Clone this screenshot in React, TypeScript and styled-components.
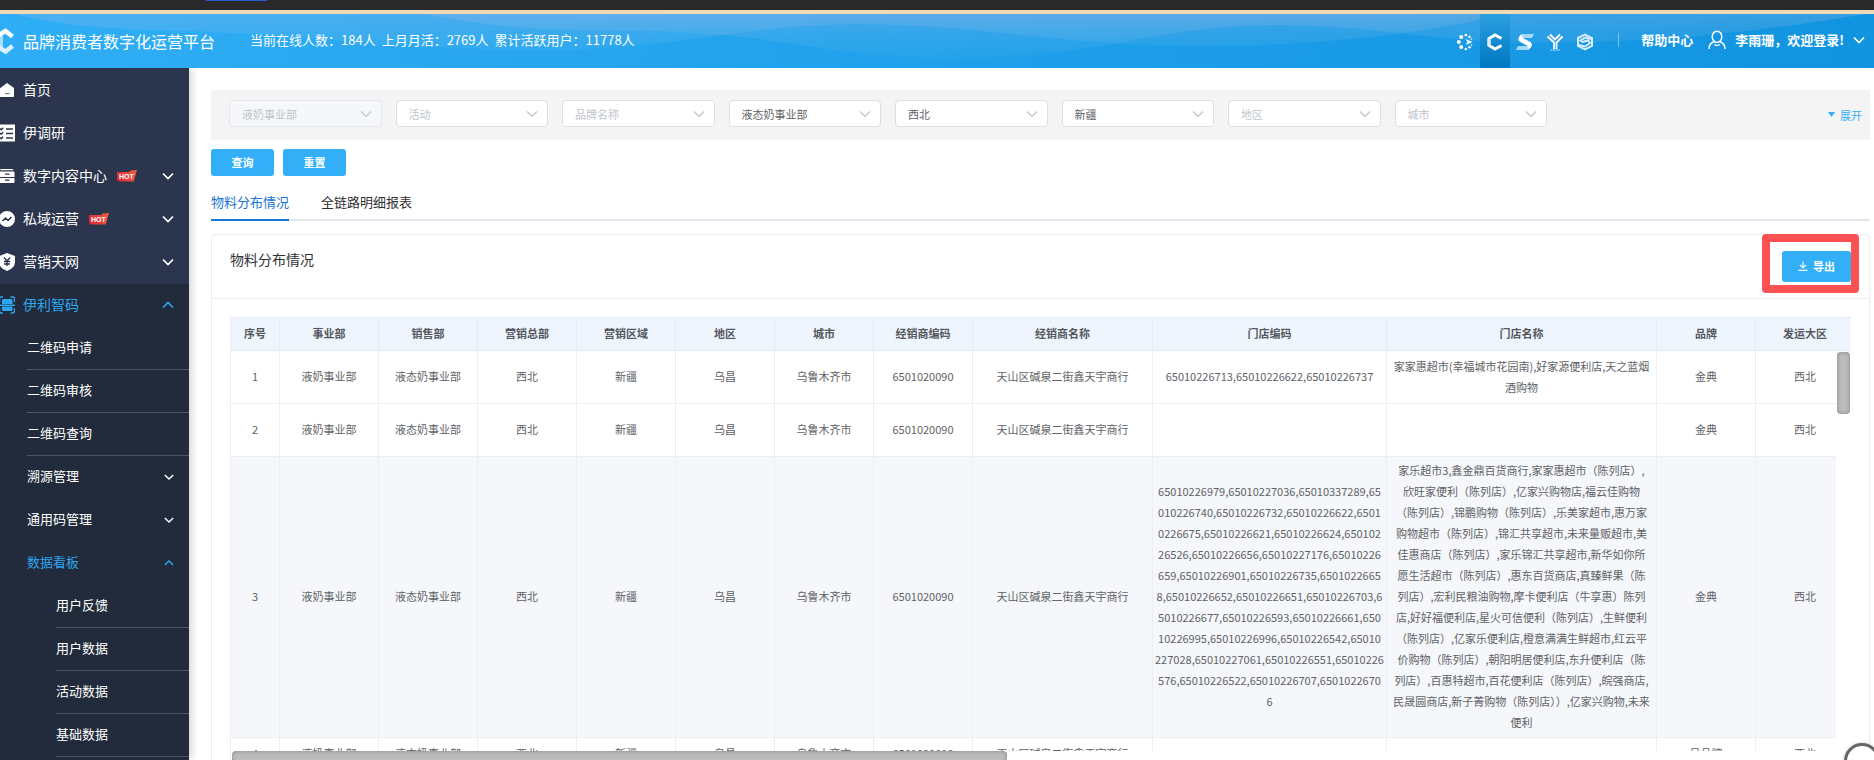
import React from "react";
import styled, { createGlobalStyle, css } from "styled-components";

const GlobalStyle = createGlobalStyle`
  *, *::before, *::after { box-sizing: border-box; }
  html, body, #root { height: 100%; }
  body {
    margin: 0;
    overflow: hidden;
    background: #fff;
    color: #303133;
    font-family: "Noto Sans CJK SC", "Noto Sans", sans-serif;
    font-size: 13px;
  }
  button, select { font-family: inherit; }
  a { color: inherit; text-decoration: none; }
`;

const BLUE = "#33aff8";

const Page = styled.div`
  display: flex;
  flex-direction: column;
  height: 100vh;
  overflow: hidden;
`;

const BrowserEdge = styled.div`
  flex: none;
  height: 14px;
  padding-left: 206px;
  background: #292929;
  border-bottom: 4px solid #eedab5;
`;

const BrowserTab = styled.div`
  width: 61px;
  height: 1px;
  background: #2a5bd0;
`;

/* ---------- top bar ---------- */

const TopBar = styled.header`
  position: relative;
  flex: none;
  display: flex;
  align-items: center;
  height: 54px;
  padding-right: 9px;
  color: #fff;
  background: linear-gradient(100deg, #30aef5 0%, #1f9fea 55%, #1194e0 100%);
`;

const Waves = styled.svg`
  position: absolute;
  inset: 0;
  width: 100%;
  height: 100%;
`;

const Brand = styled.h1`
  position: relative;
  display: flex;
  align-items: center;
  gap: 9px;
  width: 250px;
  margin: 0;
  font-size: 16px;
  font-weight: 400;
  line-height: 54px;
  white-space: nowrap;
`;

const Stats = styled.div`
  position: relative;
  display: flex;
  gap: 6px;
  flex: 1;
  padding-bottom: 2px;
  line-height: 20px;
  white-space: nowrap;
`;

const AppNav = styled.nav`
  position: relative;
  display: flex;
  height: 54px;
`;

const AppLink = styled.a<{ $active?: boolean }>`
  display: flex;
  align-items: center;
  justify-content: center;
  width: 30px;
  height: 54px;
  padding-top: 2px;
  ${(p) => p.$active && css`background: linear-gradient(#2b9fe0, #0077c2);`}
`;

const Divider = styled.span`
  position: relative;
  width: 1px;
  height: 14px;
  margin: 0 22px 3px 18px;
  background: rgba(255, 255, 255, 0.4);
`;

const HelpLink = styled.a`
  position: relative;
  padding-bottom: 2px;
  font-weight: 700;
  line-height: 20px;
`;

const UserButton = styled.button`
  position: relative;
  display: flex;
  align-items: center;
  gap: 9px;
  margin-left: 15px;
  padding: 0 0 2px;
  border: 0;
  background: none;
  color: #fff;
  font-size: 13px;
  font-weight: 700;
  line-height: 20px;
  white-space: nowrap;
`;

/* ---------- side bar ---------- */

const Columns = styled.div`
  display: flex;
  flex: 1;
  min-height: 0;
`;

const SideBar = styled.nav`
  flex: none;
  width: 189px;
  padding-top: 1px;
  overflow: hidden;
  background: #2b364e;
  color: #fff;
  box-shadow: 2px 0 8px rgba(0, 0, 0, 0.2);
`;

const OpenSection = styled.div`
  background: #222b3b;
  min-height: 100%;
`;

const MenuLink = styled.a<{ $active?: boolean }>`
  display: flex;
  align-items: center;
  gap: 8px;
  height: 43px;
  padding: 0 15px 2px 0;
  font-size: 14px;
  line-height: 20px;
  color: ${(p) => (p.$active ? "#2ea5ef" : "#fff")};
`;

const SubMenuLink = styled.a<{ $level: 1 | 2; $lined?: boolean; $active?: boolean }>`
  display: flex;
  align-items: center;
  height: 43px;
  margin-left: ${(p) => (p.$level === 1 ? 27 : 56)}px;
  padding: 0 15px 2px 0;
  border-bottom: ${(p) => (p.$lined ? "1px solid #4c5464" : "0")};
  font-size: 13px;
  line-height: 20px;
  color: ${(p) => (p.$active ? "#2ea5ef" : "#fff")};
`;

const MenuText = styled.span`
  padding-bottom: 1px;
  white-space: nowrap;
`;

const Spring = styled.span`
  flex: 1;
`;

const Hot = styled.span`
  width: 20px;
  height: 12px;
  margin-left: 2px;
  padding: 3px 0 0 2px;
  background: linear-gradient(60deg, #d92436, #f2603f);
  clip-path: polygon(0 20%, 60% 20%, 72% 4%, 78% 10%, 100% 0, 84% 100%, 8% 100%, 0 88%);
  font-family: "Liberation Sans", sans-serif;
  font-size: 7px;
  font-weight: 700;
  line-height: 8px;
`;

/* ---------- content ---------- */

const Main = styled.main`
  flex: 1;
  min-width: 0;
  overflow: hidden;
  padding: 22px 4px 0 22px;
`;

const FilterPanel = styled.form`
  display: grid;
  grid-template-columns: repeat(8, 1fr) 309px;
  align-items: center;
  gap: 14px;
  height: 50px;
  padding-left: 18px;
  padding-bottom: 3px;
  background: #f4f4f4;
`;

const SelectBox = styled.label`
  position: relative;
  display: block;
`;

const SelectInput = styled.select<{ $filled?: boolean }>`
  display: block;
  appearance: none;
  width: 100%;
  height: 27px;
  padding: 0 26px 0 12px;
  border: 1px solid #dcdfe6;
  border-radius: 4px;
  background: #fff;
  color: ${(p) => (p.$filled ? "#606266" : "#c0c4cc")};
  font-size: 11px;
  opacity: 1;
  &:disabled {
    border-color: #e4e7ed;
    background: #f5f7fa;
  }
`;

const SelectArrow = styled.span`
  position: absolute;
  top: 8px;
  right: 10px;
  display: flex;
  pointer-events: none;
`;

const ExpandButton = styled.button`
  display: flex;
  align-items: center;
  justify-self: end;
  gap: 5px;
  margin-right: 8px;
  padding: 2px 0 0;
  border: 0;
  background: none;
  color: ${BLUE};
  font-size: 11px;
`;

const Actions = styled.div`
  display: flex;
  gap: 9px;
  margin-top: 9px;
`;

const PrimaryButton = styled.button`
  display: flex;
  align-items: center;
  justify-content: center;
  gap: 5px;
  width: 63px;
  height: 27px;
  padding: 0 0 1px;
  border: 0;
  border-radius: 3px;
  background: ${BLUE};
  color: #fff;
  font-size: 11px;
  font-weight: 700;
`;

const ExportButton = styled(PrimaryButton)`
  width: 69px;
  height: 31px;
`;

const Tabs = styled.div`
  display: flex;
  gap: 32px;
  height: 36px;
  margin-top: 9px;
  border-bottom: 2px solid #e4e7ed;
`;

const Tab = styled.button<{ $active?: boolean }>`
  height: 36px;
  padding: 0;
  border: 0;
  border-bottom: 2px solid ${(p) => (p.$active ? "#1976d2" : "transparent")};
  background: none;
  color: ${(p) => (p.$active ? "#1976d2" : "#303133")};
  font-size: 13px;
  line-height: 20px;
`;

const Card = styled.section`
  margin-top: 13px;
  border: 1px solid #ebeef5;
  border-radius: 4px;
`;

const CardHead = styled.div`
  display: flex;
  justify-content: space-between;
  height: 64px;
  padding: 16px 18px 0;
  border-bottom: 1px solid #ebeef5;
`;

const CardTitle = styled.h2`
  margin: 0;
  font-size: 14px;
  font-weight: 400;
  line-height: 16px;
`;

const ExportArea = styled.div`
  position: relative;
`;

const Highlight = styled.span`
  position: absolute;
  top: -17px;
  right: -8px;
  width: 97px;
  height: 59px;
  border: 8px solid #fc5152;
  border-radius: 4px;
  pointer-events: none;
`;

const TableWrap = styled.div`
  position: relative;
  margin: 18px 18px 0;
  overflow: hidden;
  border-left: 1px solid #ebeef5;
`;

const Grid = styled.table`
  width: 1624px;
  table-layout: fixed;
  border-collapse: separate;
  border-spacing: 0;
  color: #606266;
  font-size: 11px;
  line-height: 21px;
  text-align: center;
  white-space: nowrap;
`;

const HeadCell = styled.th`
  height: 34px;
  padding: 0 0 2px;
  border: solid #e6ebf3;
  border-width: 1px 1px 1px 0;
  background: #eef5fc;
  color: #55585e;
  font-weight: 700;
`;

const BodyView = styled.div`
  height: 400px;
  margin-right: 15px;
  overflow: hidden;
`;

const Row = styled.tr<{ $height: number; $shaded?: boolean }>`
  height: ${(p) => p.$height}px;
  background: ${(p) => (p.$shaded ? "#f5f7fa" : "#fff")};
`;

const Cell = styled.td`
  padding: 3px 0 4px;
  border: solid #ebeef5;
  border-width: 0 1px 1px 0;
`;

const VerticalThumb = styled.div`
  position: absolute;
  top: 35px;
  right: 1px;
  width: 13px;
  height: 62px;
  border-radius: 4px;
  background: #bcbcbc;
  box-shadow: inset 0 0 4px rgba(0, 0, 0, 0.3);
`;

const HorizontalThumb = styled.div`
  width: 775px;
  height: 14px;
  margin-left: 1px;
  border-radius: 4px;
  background: #bcbcbc;
  box-shadow: inset 0 0 4px rgba(0, 0, 0, 0.3);
`;

const FloatButton = styled.button`
  position: fixed;
  right: -6px;
  bottom: -19px;
  width: 36px;
  height: 36px;
  border: 3px solid #666;
  border-radius: 50%;
  background: #fff;
  box-shadow: 0 0 3px rgba(0, 0, 0, 0.2);
`;

/* ---------- icons ---------- */

type ChevronProps = { size?: number; up?: boolean; color?: string; weight?: number };

const Chevron = ({ size = 12, up, color = "currentColor", weight = 1.7 }: ChevronProps) => (
  <svg width={size} height={size} viewBox="0 0 12 12" fill="none" stroke={color} strokeWidth={weight} aria-hidden="true">
    <path d={up ? "M1 8.5 6 3.5l5 5" : "M1 3.5l5 5 5-5"} />
  </svg>
);

const BrandMark = () => (
  <svg width="14" height="27" viewBox="0 0 14 27" fill="none" aria-hidden="true">
    <path d="M1 8v11" stroke="#a9defc" strokeWidth="4" />
    <path d="M-2 7.500 5.500 3 12.500 8.500" stroke="#fff" strokeWidth="4.500" />
    <path d="M-2 19 5.500 23.500 12.500 18" stroke="#d9f1fe" strokeWidth="4.500" />
  </svg>
);

const SparkIcon = () => (
  <svg width="18" height="18" viewBox="0 0 18 18" fill="#fff" aria-hidden="true">
    <circle cx="2.800" cy="9" r="2" />
    <circle cx="5.200" cy="4" r="2" />
    <circle cx="5.200" cy="14" r="2" />
    <circle cx="9.800" cy="2" r="1.300" />
    <circle cx="9.800" cy="16" r="1.300" />
    <circle cx="13.500" cy="3.800" r="1.200" />
    <circle cx="13.500" cy="14.200" r="1.200" />
    <circle cx="15.500" cy="6" r=".8" />
    <circle cx="15.500" cy="12" r=".8" />
    <path d="M9.500 6 16.500 9l-7 3 2-3z" />
  </svg>
);

const HexCIcon = () => (
  <svg width="18" height="18" viewBox="0 0 18 18" fill="none" stroke="#fff" strokeWidth="3" aria-hidden="true">
    <path d="M15.500 5.500 9 2 3 5.500v7L9 16l6.500-3.500" />
    <path d="M3 5.500v7" stroke="#cfeafb" />
  </svg>
);

const SIcon = () => (
  <svg width="18" height="18" viewBox="0 0 18 18" aria-hidden="true">
    <path d="M5 1h13l-2 4H3z" fill="#a5d7f7" />
    <path d="M0 17h13l2-4H2z" fill="#a5d7f7" />
    <path d="M4.500 2.500Q1.500 6 3.500 8l8 4.500q1 .8 .5 2.500h2q3-3.500 .5-5.500L7 5.500Q6 5 6.500 3.500z" fill="#fff" stroke="#fff" strokeWidth=".8" />
  </svg>
);

const YIcon = () => (
  <svg width="18" height="18" viewBox="0 0 18 18" fill="none" stroke="#fff" aria-hidden="true">
    <path d="M1.500 3.500 8 9.500V16M4 1.500l5 5 5-5M16.500 3.500 10.500 9.500V16" strokeWidth="1.800" />
    <path d="M4 17h10" strokeWidth="1" stroke="#a5d7f7" />
  </svg>
);

const HexSIcon = () => (
  <svg width="18" height="18" viewBox="0 0 18 18" fill="none" stroke="#d5edfc" strokeWidth="2" aria-hidden="true">
    <path d="M2 5 9 1.500 16 5v8l-7 3.500L2 13z" />
    <path d="M15 6 9.500 4.500 4.500 7.500l2 1.500 5.500-1.500 2 2.500L9 13.500 3 12" />
  </svg>
);

const UserIcon = () => (
  <svg width="18" height="20" viewBox="0 0 18 20" fill="none" stroke="#fff" strokeWidth="1.500" aria-hidden="true">
    <ellipse cx="9" cy="6.800" rx="4.800" ry="5.600" />
    <path d="M1 19c0-3.500 1.800-6 4.800-7.200M17 19c0-3.500-1.800-6-4.800-7.200M6 14.500q3 2 6 0" />
  </svg>
);

const MenuSvg = styled.svg`
  flex: none;
  width: 15px;
  height: 18px;
`;

const HomeIcon = () => (
  <MenuSvg viewBox="0 0 15 18" aria-hidden="true">
    <path d="M-1 8 7 2l7 5v8q0 1-1 1H-1z" fill="#fff" />
    <path d="M5 12.500h4.500" stroke="#77809a" strokeWidth="1.200" />
  </MenuSvg>
);

const SurveyIcon = () => (
  <MenuSvg viewBox="0 0 15 18" fill="none" aria-hidden="true">
    <path d="M-2 .5h17v17H-2z" fill="#fff" />
    <path d="M6 5h7M6 9.500h7M6 14h7M0 4.500l1.200 1.200 2-2M0 9l1.200 1.200 2-2M0 13.500l1.200 1.200 2-2" stroke="#2b364e" strokeWidth="1.500" />
  </MenuSvg>
);

const DrawerIcon = () => (
  <MenuSvg viewBox="0 0 15 18" fill="#fff" aria-hidden="true">
    <path d="M1 2h11q1 0 1.500 1.200H0Q.3 2 1 2zM-1 4.500h14.500q1 0 1 1V10H-1zM-1 11h15.500v4q0 1-1 1H0z" />
    <path d="M5 7.200h4.500M5 13.200h4.500" stroke="#2b364e" strokeWidth="1.200" />
  </MenuSvg>
);

const TrendIcon = () => (
  <MenuSvg viewBox="0 0 15 18" aria-hidden="true">
    <circle cx="7" cy="9" r="8" fill="#fff" />
    <path d="M2.500 11 5.500 8l2.500 2.500 3.500-3.500" stroke="#2b364e" strokeWidth="1.500" fill="none" />
  </MenuSvg>
);

const ShieldIcon = () => (
  <MenuSvg viewBox="0 0 15 18" aria-hidden="true">
    <path d="M7 0l8 3v6q0 6-8 9-8-3-8-9V3z" fill="#fff" />
    <path d="M4 4.500 7 8l3-3.500M7 8v5M4 8.500h6M4 11h6" stroke="#2b364e" strokeWidth="1.400" fill="none" />
  </MenuSvg>
);

const ScanIcon = () => (
  <MenuSvg viewBox="0 0 15 18" fill="#2ea5ef" aria-hidden="true">
    <path d="M3 3h8q1.500 0 1.500 1.500V8H2V4.500Q2 3 3 3zM2 10.500h10.500v3q0 1.500-1.500 1.500H3q-1 0-1-1.500z" />
    <path d="M-1 9.200h16M10.500 1h2Q14.500 1 14.500 3v3M14.500 12v3q0 2-2 2h-2M3 1H1Q-.5 1-.5 3v3M-.5 12v3q0 2 1.500 2h2" stroke="#2ea5ef" strokeWidth="1.400" fill="none" />
  </MenuSvg>
);

const DownloadIcon = () => (
  <svg width="10" height="10" viewBox="0 0 10 10" fill="none" stroke="#fff" strokeWidth="1.200" aria-hidden="true">
    <path d="M5 .5v6M2 3.800 5 6.800l3-3M.5 9.300h9" />
  </svg>
);

/* ---------- data ---------- */

const apps = [
  { name: "星火", icon: <SparkIcon /> },
  { name: "C 平台", icon: <HexCIcon />, active: true },
  { name: "S 平台", icon: <SIcon /> },
  { name: "Y 平台", icon: <YIcon /> },
  { name: "蜂巢", icon: <HexSIcon /> },
];

const menu = [
  { label: "首页", icon: <HomeIcon /> },
  { label: "伊调研", icon: <SurveyIcon /> },
  { label: "数字内容中心", icon: <DrawerIcon />, hot: true, more: true },
  { label: "私域运营", icon: <TrendIcon />, hot: true, more: true },
  { label: "营销天网", icon: <ShieldIcon />, more: true },
];

type SubItem = { label: string; level: 1 | 2; lined?: boolean; more?: boolean; open?: boolean };

const subMenu: SubItem[] = [
  { label: "二维码申请", level: 1, lined: true },
  { label: "二维码审核", level: 1, lined: true },
  { label: "二维码查询", level: 1, lined: true },
  { label: "溯源管理", level: 1, more: true },
  { label: "通用码管理", level: 1, more: true },
  { label: "数据看板", level: 1, more: true, open: true },
  { label: "用户反馈", level: 2, lined: true },
  { label: "用户数据", level: 2, lined: true },
  { label: "活动数据", level: 2, lined: true },
  { label: "基础数据", level: 2, lined: true },
];

const filters = [
  { name: "事业部", text: "液奶事业部", disabled: true },
  { name: "活动", text: "活动" },
  { name: "品牌名称", text: "品牌名称" },
  { name: "销售部", text: "液态奶事业部", filled: true },
  { name: "营销总部", text: "西北", filled: true },
  { name: "营销区域", text: "新疆", filled: true },
  { name: "地区", text: "地区" },
  { name: "城市", text: "城市" },
];

const columns = [
  { title: "序号", width: 49 },
  { title: "事业部", width: 99 },
  { title: "销售部", width: 99 },
  { title: "营销总部", width: 99 },
  { title: "营销区域", width: 99 },
  { title: "地区", width: 99 },
  { title: "城市", width: 99 },
  { title: "经销商编码", width: 99 },
  { title: "经销商名称", width: 180 },
  { title: "门店编码", width: 234 },
  { title: "门店名称", width: 270 },
  { title: "品牌", width: 99 },
  { title: "发运大区", width: 99 },
];

type StoreRecord = { codes: string[]; stores: string[]; brand: string; height: number; shaded?: boolean };

const records: StoreRecord[] = [
  {
    codes: ["65010226713,65010226622,65010226737"],
    stores: ["家家惠超市(幸福城市花园南),好家源便利店,天之蓝烟", "酒购物"],
    brand: "金典",
    height: 53,
  },
  { codes: [], stores: [], brand: "金典", height: 53 },
  {
    codes: [
      "65010226979,65010227036,65010337289,65",
      "010226740,65010226732,65010226622,6501",
      "0226675,65010226621,65010226624,650102",
      "26526,65010226656,65010227176,65010226",
      "659,65010226901,65010226735,6501022665",
      "8,65010226652,65010226651,65010226703,6",
      "5010226677,65010226593,65010226661,650",
      "10226995,65010226996,65010226542,65010",
      "227028,65010227061,65010226551,65010226",
      "576,65010226522,65010226707,6501022670",
      "6",
    ],
    stores: [
      "家乐超市3,鑫金鼎百货商行,家家惠超市（陈列店）,",
      "欣旺家便利（陈列店）,亿家兴购物店,福云佳购物",
      "（陈列店）,锦鹏购物（陈列店）,乐美家超市,惠万家",
      "购物超市（陈列店）,锦汇共享超市,未来量贩超市,美",
      "佳惠商店（陈列店）,家乐锦汇共享超市,新华如你所",
      "愿生活超市（陈列店）,惠东百货商店,真臻鲜果（陈",
      "列店）,宏利民粮油购物,摩卡便利店（牛享惠）陈列",
      "店,好好福便利店,星火可信便利（陈列店）,生鲜便利",
      "（陈列店）,亿家乐便利店,橙意满满生鲜超市,红云平",
      "价购物（陈列店）,朝阳明居便利店,东升便利店（陈",
      "列店）,百惠特超市,百花便利店（陈列店）,皖强商店,",
      "民晟圆商店,新子菁购物（陈列店））,亿家兴购物,未来",
      "便利",
    ],
    brand: "金典",
    height: 281,
    shaded: true,
  },
  { codes: [], stores: [], brand: "呈品牌", height: 33 },
];

const Lines = ({ items }: { items: string[] }) => (
  <>
    {items.map((line, i) => (
      <React.Fragment key={i}>
        {i > 0 && <br />}
        {line}
      </React.Fragment>
    ))}
  </>
);

const ColumnWidths = () => (
  <colgroup>
    {columns.map((c) => (
      <col key={c.title} width={c.width} />
    ))}
  </colgroup>
);

/* ---------- page ---------- */

export default function App() {
  return (
    <Page>
      <GlobalStyle />
      <BrowserEdge>
        <BrowserTab />
      </BrowserEdge>

      <TopBar>
        <Waves viewBox="0 0 1874 54" preserveAspectRatio="none" aria-hidden="true">
          <defs>
            <linearGradient id="wave" x1="0" y1="0" x2="0" y2="54" gradientUnits="userSpaceOnUse">
              <stop offset="0" stopColor="#a4b8e6" stopOpacity=".26" />
              <stop offset="1" stopColor="#7ad0e8" stopOpacity="0" />
            </linearGradient>
          </defs>
          <path
            fill="url(#wave)"
            d="M15 0C60 12 110 15 180 17C300 20 400 36 540 36C680 36 740 10 860 10C980 10 1060 32 1196 32C1320 32 1420 20 1505 0Z"
          />
          <path
            fill="url(#wave)"
            d="M425 0C500 15 560 17 640 17C780 18 820 44 952 44C1110 44 1150 11 1277 11C1380 11 1440 30 1550 29C1680 28 1780 14 1866 0Z"
          />
        </Waves>
        <Brand>
          <BrandMark />
          品牌消费者数字化运营平台
        </Brand>
        <Stats>
          <span>当前在线人数：184人</span>
          <span>上月月活：2769人</span>
          <span>累计活跃用户：11778人</span>
        </Stats>
        <AppNav aria-label="应用">
          {apps.map((app) => (
            <AppLink key={app.name} href="#" aria-label={app.name} $active={app.active}>
              {app.icon}
            </AppLink>
          ))}
        </AppNav>
        <Divider />
        <HelpLink href="#">帮助中心</HelpLink>
        <UserButton type="button">
          <UserIcon />
          李雨珊，欢迎登录!
          <Chevron size={12} />
        </UserButton>
      </TopBar>

      <Columns>
        <SideBar>
          {menu.map((item) => (
            <MenuLink key={item.label} href="#">
              {item.icon}
              <MenuText>{item.label}</MenuText>
              {item.hot && <Hot>HOT</Hot>}
              <Spring />
              {item.more && <Chevron />}
            </MenuLink>
          ))}
          <OpenSection>
            <MenuLink href="#" $active>
              <ScanIcon />
              <MenuText>伊利智码</MenuText>
              <Spring />
              <Chevron up />
            </MenuLink>
            {subMenu.map((item) => (
              <SubMenuLink key={item.label} href="#" $level={item.level} $lined={item.lined} $active={item.open}>
                <MenuText>{item.label}</MenuText>
                <Spring />
                {item.more && <Chevron size={10} up={item.open} />}
              </SubMenuLink>
            ))}
          </OpenSection>
        </SideBar>

        <Main>
          <FilterPanel>
            {filters.map((f) => (
              <SelectBox key={f.name}>
                <SelectInput aria-label={f.name} disabled={f.disabled} $filled={f.filled}>
                  <option>{f.text}</option>
                </SelectInput>
                <SelectArrow>
                  <Chevron size={12} color="#c0c4cc" weight={1.2} />
                </SelectArrow>
              </SelectBox>
            ))}
            <ExpandButton type="button">
              <svg width="7" height="5" viewBox="0 0 7 5" aria-hidden="true">
                <path d="M0 0h7L3.500 5z" fill={BLUE} />
              </svg>
              展开
            </ExpandButton>
          </FilterPanel>

          <Actions>
            <PrimaryButton type="button">查询</PrimaryButton>
            <PrimaryButton type="button">重置</PrimaryButton>
          </Actions>

          <Tabs role="tablist">
            <Tab type="button" role="tab" aria-selected="true" $active>
              物料分布情况
            </Tab>
            <Tab type="button" role="tab" aria-selected="false">
              全链路明细报表
            </Tab>
          </Tabs>

          <Card>
            <CardHead>
              <CardTitle>物料分布情况</CardTitle>
              <ExportArea>
                <ExportButton type="button">
                  <DownloadIcon />
                  导出
                </ExportButton>
                <Highlight />
              </ExportArea>
            </CardHead>
            <TableWrap>
              <Grid>
                <ColumnWidths />
                <thead>
                  <tr>
                    {columns.map((c) => (
                      <HeadCell key={c.title}>{c.title}</HeadCell>
                    ))}
                  </tr>
                </thead>
              </Grid>
              <BodyView>
                <Grid>
                  <ColumnWidths />
                  <tbody>
                    {records.map((r, i) => (
                      <Row key={i} $height={r.height} $shaded={r.shaded}>
                        <Cell>{i + 1}</Cell>
                        <Cell>液奶事业部</Cell>
                        <Cell>液态奶事业部</Cell>
                        <Cell>西北</Cell>
                        <Cell>新疆</Cell>
                        <Cell>乌昌</Cell>
                        <Cell>乌鲁木齐市</Cell>
                        <Cell>6501020090</Cell>
                        <Cell>天山区碱泉二街鑫天宇商行</Cell>
                        <Cell><Lines items={r.codes} /></Cell>
                        <Cell><Lines items={r.stores} /></Cell>
                        <Cell>{r.brand}</Cell>
                        <Cell>西北</Cell>
                      </Row>
                    ))}
                  </tbody>
                </Grid>
              </BodyView>
              <VerticalThumb />
              <HorizontalThumb />
            </TableWrap>
          </Card>
        </Main>
      </Columns>
      <FloatButton type="button" aria-label="客服" />
    </Page>
  );
}
